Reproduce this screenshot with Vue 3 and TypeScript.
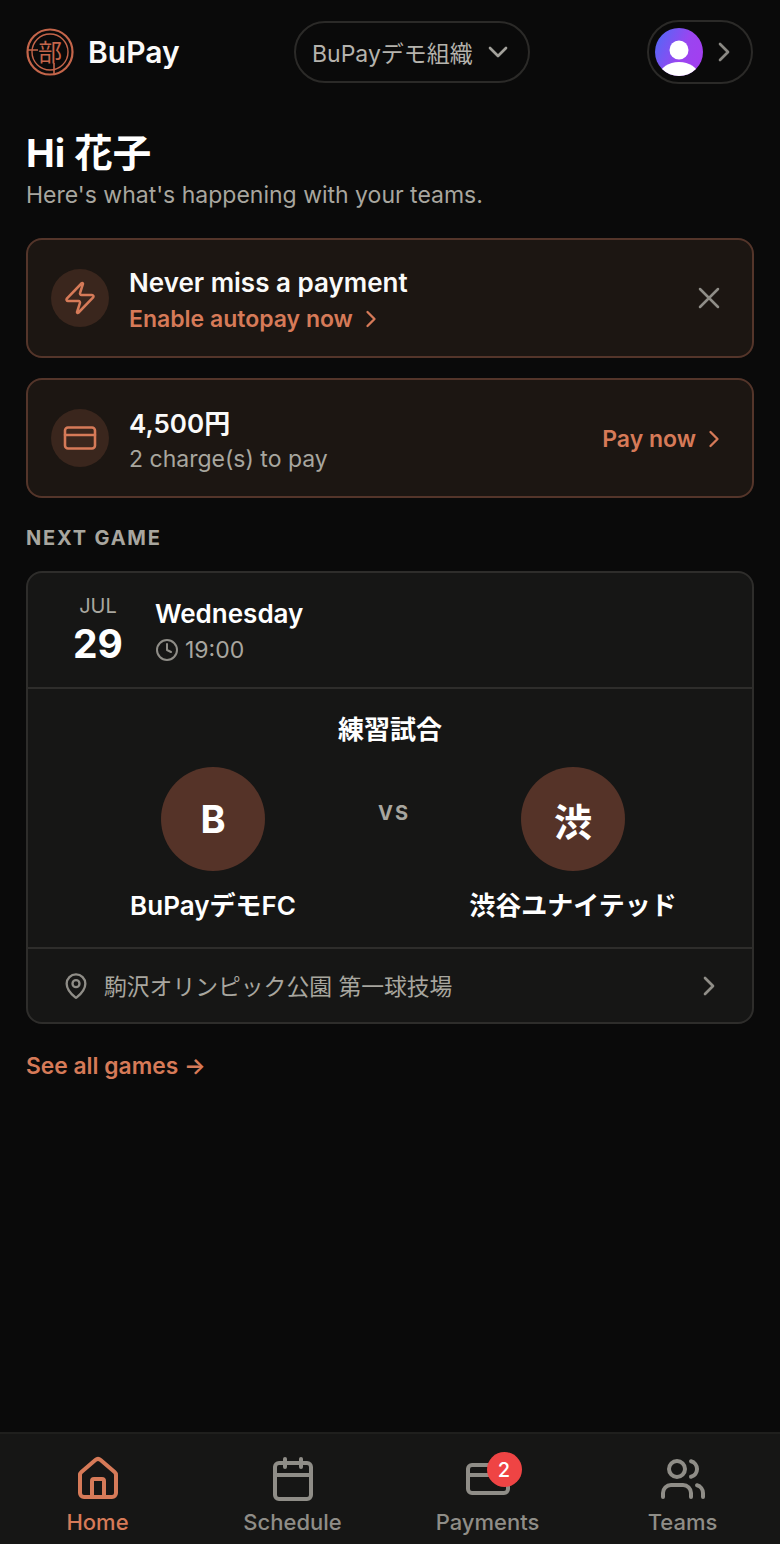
<template>
  <div class="page">
    <header class="top">
      <div class="brand">
        <svg class="logo" viewBox="0 0 48 48" fill="none" stroke="#c4654a">
          <circle cx="24" cy="24" r="22.5" stroke-width="2.2" />
          <circle cx="24" cy="24" r="18" stroke-width="1.4" />
          <path d="M2 22h10M28 35v11" stroke-width="1.6" />
          <text x="24" y="33" text-anchor="middle" class="logo-char">部</text>
        </svg>
        <span class="brand-name">BuPay</span>
      </div>
      <button class="org-pill">
        <span>BuPayデモ組織</span>
        <svg class="org-caret" viewBox="0 0 24 24" fill="none" stroke="currentColor" stroke-width="2" stroke-linecap="round" stroke-linejoin="round"><path d="m6 9 6 6 6-6" /></svg>
      </button>
      <button class="user-pill">
        <span class="avatar">
          <svg viewBox="0 0 48 48">
            <circle cx="24" cy="22" r="9.5" fill="#fff" />
            <ellipse cx="24" cy="47" rx="19" ry="13" fill="#fff" />
          </svg>
        </span>
        <svg class="user-caret" viewBox="0 0 24 24" fill="none" stroke="currentColor" stroke-width="2" stroke-linecap="round" stroke-linejoin="round"><path d="m9 6 6 6-6 6" /></svg>
      </button>
    </header>

    <main class="content">
      <h1 class="hello">Hi 花子</h1>
      <p class="sub">Here's what's happening with your teams.</p>

      <section class="notice">
        <span class="notice-icon">
          <svg viewBox="0 0 24 24" fill="none" stroke="currentColor" stroke-width="1.7" stroke-linecap="round" stroke-linejoin="round"><path d="M4 14a1 1 0 0 1-.78-1.63l9.9-10.2a.5.5 0 0 1 .86.46l-1.92 6.02A1 1 0 0 0 13 10h7a1 1 0 0 1 .78 1.63l-9.9 10.2a.5.5 0 0 1-.86-.46l1.92-6.02A1 1 0 0 0 11 14z" /></svg>
        </span>
        <div class="notice-text">
          <div class="notice-title">Never miss a payment</div>
          <div class="notice-link">
            Enable autopay now
            <svg class="link-caret" viewBox="0 0 24 24" fill="none" stroke="currentColor" stroke-width="2" stroke-linecap="round" stroke-linejoin="round"><path d="m9 6 6 6-6 6" /></svg>
          </div>
        </div>
        <svg class="close" viewBox="0 0 24 24" fill="none" stroke="currentColor" stroke-width="1.7" stroke-linecap="round"><path d="M18 6 6 18M6 6l12 12" /></svg>
      </section>

      <section class="notice">
        <span class="notice-icon">
          <svg viewBox="0 0 24 24" fill="none" stroke="currentColor" stroke-width="1.7" stroke-linecap="round" stroke-linejoin="round"><rect x="2" y="5" width="20" height="14" rx="2" /><path d="M2 10h20" /></svg>
        </span>
        <div class="notice-text">
          <div class="notice-title">4,500円</div>
          <div class="notice-sub">2 charge(s) to pay</div>
        </div>
        <div class="pay-link">
          Pay now
          <svg class="link-caret" viewBox="0 0 24 24" fill="none" stroke="currentColor" stroke-width="2" stroke-linecap="round" stroke-linejoin="round"><path d="m9 6 6 6-6 6" /></svg>
        </div>
      </section>

      <h2 class="section-label">NEXT GAME</h2>

      <section class="game">
        <div class="game-date">
          <div class="date-box">
            <span class="month">JUL</span>
            <span class="day">29</span>
          </div>
          <div class="date-text">
            <div class="weekday">Wednesday</div>
            <div class="time">
              <svg viewBox="0 0 24 24" fill="none" stroke="currentColor" stroke-width="2" stroke-linecap="round" stroke-linejoin="round"><circle cx="12" cy="12" r="10" /><path d="M12 6v6l4 2" /></svg>
              19:00
            </div>
          </div>
        </div>
        <div class="match">
          <div class="match-title">練習試合</div>
          <div class="teams">
            <div v-for="team in teams" :key="team.name" class="team">
              <span class="crest">{{ team.mark }}</span>
              <span class="team-name">{{ team.name }}</span>
            </div>
            <span class="vs">VS</span>
          </div>
        </div>
        <div class="venue">
          <svg class="pin" viewBox="0 0 24 24" fill="none" stroke="currentColor" stroke-width="2" stroke-linecap="round" stroke-linejoin="round"><path d="M20 10c0 5-5.5 10.2-7.4 11.8a1 1 0 0 1-1.2 0C9.5 20.2 4 15 4 10a8 8 0 0 1 16 0" /><circle cx="12" cy="10" r="3" /></svg>
          <span class="venue-name">駒沢オリンピック公園 第一球技場</span>
          <svg class="venue-caret" viewBox="0 0 24 24" fill="none" stroke="currentColor" stroke-width="2" stroke-linecap="round" stroke-linejoin="round"><path d="m9 6 6 6-6 6" /></svg>
        </div>
      </section>

      <a class="see-all">See all games →</a>
    </main>

    <nav class="tabs">
      <div v-for="tab in tabs" :key="tab.label" class="tab" :class="{ active: tab.active }">
        <span class="tab-icon">
          <svg viewBox="0 0 24 24" fill="none" stroke="currentColor" stroke-width="2" stroke-linecap="round" stroke-linejoin="round">
            <path v-for="d in tab.paths" :key="d" :d="d" />
          </svg>
          <span v-if="tab.badge" class="badge">{{ tab.badge }}</span>
        </span>
        <span class="tab-label">{{ tab.label }}</span>
      </div>
    </nav>
  </div>
</template>

<script setup lang="ts">
interface Team {
  mark: string
  name: string
}

interface Tab {
  label: string
  paths: string[]
  active?: boolean
  badge?: number
}

const teams: Team[] = [
  { mark: 'B', name: 'BuPayデモFC' },
  { mark: '渋', name: '渋谷ユナイテッド' }
]

const tabs: Tab[] = [
  {
    label: 'Home',
    active: true,
    paths: [
      'M15 21v-8a1 1 0 0 0-1-1h-4a1 1 0 0 0-1 1v8',
      'M3 10a2 2 0 0 1 .7-1.5l7-6a2 2 0 0 1 2.6 0l7 6A2 2 0 0 1 21 10v9a2 2 0 0 1-2 2H5a2 2 0 0 1-2-2z'
    ]
  },
  {
    label: 'Schedule',
    paths: [
      'M8 2v4',
      'M16 2v4',
      'M5 4h14a2 2 0 0 1 2 2v14a2 2 0 0 1-2 2H5a2 2 0 0 1-2-2V6a2 2 0 0 1 2-2z',
      'M3 10h18'
    ]
  },
  {
    label: 'Payments',
    badge: 2,
    paths: ['M4 5h16a2 2 0 0 1 2 2v10a2 2 0 0 1-2 2H4a2 2 0 0 1-2-2V7a2 2 0 0 1 2-2z', 'M2 10h20']
  },
  {
    label: 'Teams',
    paths: [
      'M16 21v-2a4 4 0 0 0-4-4H6a4 4 0 0 0-4 4v2',
      'M9 3a4 4 0 1 0 0 8 4 4 0 0 0 0-8z',
      'M22 21v-2a4 4 0 0 0-3-3.87',
      'M16 3.13a4 4 0 0 1 0 7.75'
    ]
  }
]
</script>

<style>
html,
body {
  margin: 0;
  background: #0a0a0a;
}
</style>

<style scoped>
.page {
  display: flex;
  flex-direction: column;
  width: 780px;
  height: 1544px;
  background: #0a0a0a;
  color: #fff;
  font-family: Inter, "Noto Sans CJK JP", sans-serif;
}

button {
  font-family: inherit;
  background: transparent;
  cursor: pointer;
}

.top {
  display: flex;
  align-items: center;
  justify-content: space-between;
  height: 64px;
  padding: 20px 27px 0 26px;
  flex-shrink: 0;
}

.brand {
  display: flex;
  align-items: center;
  gap: 14px;
  width: 268px;
}

.logo {
  width: 48px;
  height: 48px;
}

.logo-char {
  fill: #c4654a;
  stroke: none;
  font-size: 24px;
  font-weight: 400;
  font-family: "Noto Sans CJK JP", sans-serif;
}

.brand-name {
  font-size: 30px;
  font-weight: 600;
  color: #fafaf9;
}

.org-pill {
  display: flex;
  align-items: center;
  gap: 9px;
  width: 236px;
  height: 62px;
  padding: 0 0 0 16px;
  border: 2px solid #2b2a28;
  border-radius: 31px;
  color: #b5b3ad;
  font-size: 23px;
}

.org-caret {
  width: 32px;
  height: 32px;
  color: #a3a19b;
}

.user-pill {
  display: flex;
  align-items: center;
  gap: 5px;
  width: 106px;
  height: 64px;
  margin-left: 117px;
  padding: 0 0 0 6px;
  border: 2px solid #2b2a28;
  border-radius: 32px;
}

.avatar {
  display: block;
  width: 48px;
  height: 48px;
  border-radius: 50%;
  overflow: hidden;
  background: linear-gradient(115deg, #4a6cf7 0%, #9a45f0 55%, #a63cf0 100%);
}

.avatar svg {
  display: block;
}

.user-caret {
  width: 32px;
  height: 32px;
  color: #8a8883;
}

.content {
  flex: 1;
  padding: 0 26px;
}

.hello {
  margin: 45px 0 0;
  font-size: 38.5px;
  line-height: 48px;
  font-weight: 700;
}

.sub {
  margin: 2px 0 0;
  font-size: 23px;
  line-height: 32px;
  color: #a8a69f;
}

.notice {
  display: flex;
  align-items: center;
  height: 120px;
  margin-top: 20px;
  padding: 0 23px;
  box-sizing: border-box;
  background: #1c1612;
  border: 2px solid #54352a;
  border-radius: 16px;
}

.sub + .notice {
  margin-top: 27px;
}

.notice-icon {
  display: flex;
  align-items: center;
  justify-content: center;
  width: 58px;
  height: 58px;
  margin-right: 20px;
  border-radius: 50%;
  background: #3a261d;
  color: #d67a58;
  flex-shrink: 0;
}

.notice-icon svg {
  width: 36px;
  height: 36px;
}

.notice-text {
  flex: 1;
  padding-top: 5px;
}

.notice-title {
  font-size: 26px;
  line-height: 36px;
  font-weight: 600;
  color: #fafaf9;
}

.notice-link {
  display: flex;
  align-items: center;
  gap: 4px;
  font-size: 23px;
  line-height: 36px;
  font-weight: 600;
  color: #d67a58;
}

.link-caret {
  width: 28px;
  height: 28px;
}

.notice-sub {
  font-size: 23px;
  line-height: 34px;
  color: #a8a69f;
}

.close {
  width: 36px;
  height: 36px;
  margin-right: 2px;
  color: #8f8d87;
}

.pay-link {
  display: flex;
  align-items: center;
  gap: 4px;
  margin-right: 1px;
  padding-top: 2px;
  font-size: 23px;
  font-weight: 600;
  color: #d67a58;
}

.section-label {
  margin: 26px 0 0;
  font-size: 20px;
  line-height: 28px;
  font-weight: 700;
  letter-spacing: 1.8px;
  color: #a8a69f;
}

.game {
  margin-top: 19px;
  background: #161615;
  border: 2px solid #2e2d2b;
  border-radius: 16px;
  height: 453px;
  box-sizing: border-box;
  display: flex;
  flex-direction: column;
}

.game-date {
  display: flex;
  align-items: center;
  height: 116px;
  padding: 0 0 0 30px;
  box-sizing: border-box;
  border-bottom: 2px solid #2e2d2b;
}

.date-box {
  display: flex;
  flex-direction: column;
  align-items: center;
  width: 80px;
  margin-right: 17px;
  padding-top: 2px;
}

.date-text {
  padding-top: 3px;
}

.month {
  font-size: 20px;
  line-height: 26px;
  color: #a8a69f;
}

.day {
  font-size: 39px;
  line-height: 50px;
  font-weight: 700;
}

.weekday {
  font-size: 26px;
  line-height: 36px;
  font-weight: 600;
}

.time {
  display: flex;
  align-items: center;
  gap: 6px;
  font-size: 23px;
  line-height: 36px;
  color: #a8a69f;
}

.time svg {
  width: 24px;
  height: 24px;
  color: #8f8d87;
}

.match {
  position: relative;
  flex: 1;
  padding-top: 23px;
  border-bottom: 2px solid #2e2d2b;
}

.match-title {
  text-align: center;
  font-size: 26px;
  line-height: 36px;
  font-weight: 600;
}

.teams {
  position: relative;
  display: flex;
  justify-content: space-between;
  padding: 0 76px 0 82px;
  margin-top: 19px;
}

.team {
  display: flex;
  flex-direction: column;
  align-items: center;
  width: 206px;
  gap: 16px;
}

.crest {
  display: flex;
  align-items: center;
  justify-content: center;
  width: 104px;
  height: 104px;
  border-radius: 50%;
  background: #553328;
  font-size: 38px;
  font-weight: 700;
}

.team-name {
  font-size: 26px;
  line-height: 38px;
  font-weight: 600;
  white-space: nowrap;
}

.vs {
  position: absolute;
  left: 350px;
  top: 34px;
  font-size: 20px;
  font-weight: 700;
  letter-spacing: 2px;
  color: #a8a69f;
}

.venue {
  display: flex;
  align-items: center;
  height: 73px;
  padding: 0 27px 0 34px;
  flex-shrink: 0;
}

.pin {
  width: 28px;
  height: 28px;
  margin-right: 14px;
  color: #8f8d87;
}

.venue-name {
  flex: 1;
  font-size: 22.8px;
  color: #a8a69f;
}

.venue-caret {
  width: 32px;
  height: 32px;
  color: #8f8d87;
}

.see-all {
  display: block;
  margin-top: 25px;
  font-size: 22.8px;
  line-height: 34px;
  font-weight: 600;
  color: #d67a58;
}

.tabs {
  display: grid;
  grid-template-columns: repeat(4, 1fr);
  height: 112px;
  flex-shrink: 0;
  box-sizing: border-box;
  background: #161615;
  border-top: 2px solid #1f1f1d;
}

.tab {
  display: flex;
  flex-direction: column;
  align-items: center;
  padding-top: 21px;
  color: #8f8d87;
}

.tab.active {
  color: #d67a58;
}

.tab-icon {
  position: relative;
  display: block;
  width: 48px;
  height: 48px;
}

.tab-icon svg {
  display: block;
  width: 48px;
  height: 48px;
}

.badge {
  position: absolute;
  top: -3px;
  right: -10px;
  display: flex;
  align-items: center;
  justify-content: center;
  width: 35px;
  height: 35px;
  border-radius: 50%;
  background: #ef4444;
  color: #fff;
  font-size: 20px;
  font-weight: 500;
}

.tab-label {
  font-size: 22px;
  line-height: 32px;
  font-weight: 500;
  margin-top: 3px;
}
</style>
